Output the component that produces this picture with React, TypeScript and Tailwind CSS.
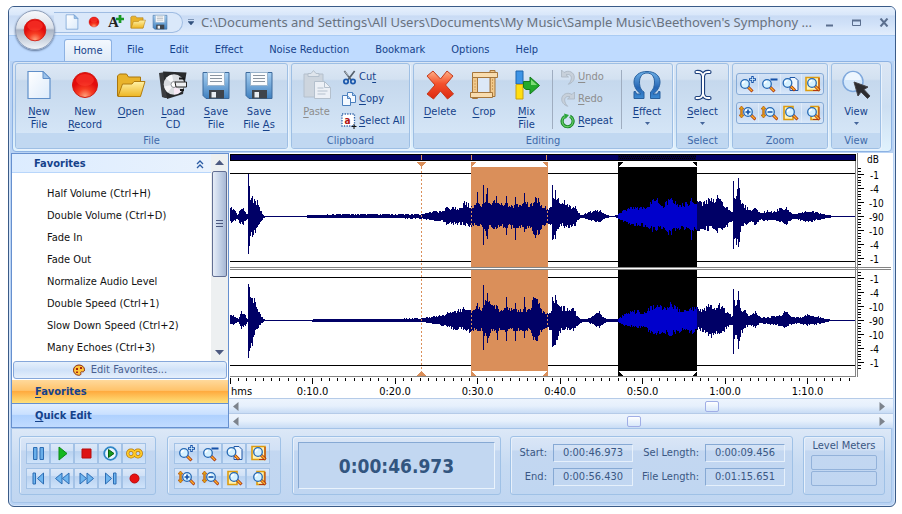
import type { ReactNode } from "react";

type Sample = [x: number, up: number, down: number];

const LEFT_CHANNEL: Sample[] = [
  [0, 8, 4], [1, 9, 6], [5, 5, 4], [7, 1, 2], [10, 6, 7], [13, 8, 8], [16, 2, 3], [17, 2, 2], [18, 42, 37], [19, 30, 29],
  [20, 16, 19], [22, 20, 20], [25, 15, 16], [27, 16, 10], [29, 9, 7], [31, 5, 4], [33, 1, 1], [36, 0, 0], [47, 0, 0],
  [74, 0, 0], [78, 1, 1], [116, 2, 1], [150, 2, 1], [191, 2, 2], [204, 5, 4], [213, 5, 5], [216, 9, 8], [225, 9, 7], [230, 8, 8], [234, 15, 8],
  [241, 10, 12], [246, 13, 8], [247, 24, 9], [248, 13, 9], [252, 12, 10], [253, 31, 28], [254, 13, 12], [257, 28, 22], [258, 13, 12],
  [263, 15, 12], [266, 20, 12], [267, 13, 11], [275, 13, 11], [276, 20, 18], [277, 13, 11], [284, 11, 11], [285, 19, 23], [286, 12, 11],
  [293, 13, 10], [294, 23, 15], [295, 14, 12], [300, 12, 11], [305, 19, 21], [308, 18, 18], [311, 11, 12], [317, 9, 8],
  [321, 9, 7], [322, 31, 23], [323, 18, 22], [325, 26, 22], [328, 18, 12], [331, 12, 9], [334, 16, 11], [339, 11, 11],
  [345, 10, 9], [348, 3, 3], [352, 1, 1], [358, 4, 3], [365, 6, 5], [370, 6, 5], [376, 1, 1], [384, 0, 0], [388, 2, 2],
  [393, 6, 5], [400, 9, 8], [410, 9, 9], [417, 9, 10], [422, 16, 15], [427, 18, 13], [432, 10, 12], [438, 17, 18],
  [441, 18, 18], [445, 15, 14], [450, 11, 12], [455, 14, 12], [460, 15, 13], [461, 18, 23], [462, 14, 13], [467, 15, 14], [473, 14, 12],
  [478, 18, 14], [483, 17, 12], [487, 21, 16], [492, 14, 13], [497, 9, 10], [502, 4, 4], [503, 35, 32], [504, 18, 22],
  [506, 20, 28], [508, 38, 30], [509, 28, 25], [510, 16, 15], [513, 12, 9], [520, 6, 5], [525, 8, 8], [530, 3, 3],
  [537, 6, 4], [543, 4, 3], [549, 8, 5], [556, 9, 8], [561, 3, 3], [566, 2, 2], [575, 5, 5], [582, 5, 5], [587, 4, 3],
  [593, 2, 2], [598, 1, 1], [603, 0, 0], [626, 0, 0],
];

const RIGHT_CHANNEL: Sample[] = [
  [0, 5, 3], [3, 5, 4], [8, 1, 1], [11, 9, 8], [15, 5, 5], [17, 1, 1], [18, 36, 37], [19, 33, 30], [20, 23, 27], [22, 22, 25],
  [24, 22, 14], [27, 11, 8], [30, 6, 4], [33, 1, 1], [36, 0, 0], [78, 0, 0], [85, 1, 1], [116, 1, 1], [160, 1, 1], [191, 2, 1],
  [203, 4, 3], [212, 5, 5], [217, 8, 6], [225, 9, 9], [233, 13, 9], [239, 10, 12], [245, 11, 9], [247, 17, 10], [252, 12, 10],
  [253, 35, 29], [254, 15, 15], [257, 27, 22], [260, 16, 12], [266, 15, 12], [267, 14, 19], [268, 11, 10], [275, 12, 11],
  [276, 23, 20], [277, 13, 10], [284, 11, 10], [285, 17, 20], [286, 11, 10], [293, 11, 10], [294, 23, 17], [295, 13, 10],
  [300, 10, 9], [303, 23, 19], [307, 21, 20], [311, 11, 11], [317, 7, 8], [321, 9, 9], [322, 23, 26], [325, 25, 24],
  [330, 13, 12], [334, 14, 9], [339, 10, 9], [343, 12, 10], [348, 3, 4], [352, 1, 1], [359, 2, 2], [365, 6, 5], [369, 9, 7],
  [373, 3, 3], [378, 1, 1], [386, 1, 1], [389, 2, 2], [394, 6, 5], [400, 9, 6], [408, 10, 7], [415, 7, 6], [418, 12, 11],
  [423, 15, 13], [430, 15, 13], [434, 13, 12], [440, 18, 15], [445, 14, 13], [449, 11, 12], [455, 10, 9], [462, 13, 13],
  [467, 13, 9], [473, 10, 11], [478, 16, 15], [481, 15, 17], [487, 12, 13], [489, 17, 13], [494, 12, 11], [498, 7, 6],
  [502, 4, 4], [503, 31, 33], [504, 20, 18], [507, 20, 18], [508, 29, 28], [509, 20, 20], [510, 12, 16], [514, 10, 7],
  [520, 5, 4], [525, 9, 7], [530, 3, 2], [537, 3, 3], [543, 4, 4], [549, 5, 5], [554, 9, 7], [557, 8, 5], [562, 3, 3],
  [570, 3, 3], [577, 6, 5], [590, 3, 3], [597, 1, 1], [602, 0, 0], [626, 0, 0],
];

function wavePath(samples: Sample[], from: number, to: number, mid: number) {
  const noise = (n: number) => {
    const v = Math.sin(n * 12.9898 + mid) * 43758.5453;
    return 0.66 + 0.4 * (v - Math.floor(v));
  };
  let top = `M${from} ${mid}`;
  let bottom = "";
  let i = 0;
  for (let x = 0; x < to; x++) {
    while (i < samples.length - 2 && samples[i + 1][0] <= x) i++;
    const [x0, u0, d0] = samples[i];
    const [x1, u1, d1] = samples[i + 1];
    const t = Math.min(1, (x - x0) / (x1 - x0));
    const peak = x === x0 ? 1 : 0;
    const up = Math.round((u0 + (u1 - u0) * t) * (peak || noise(x)));
    const down = Math.round((d0 + (d1 - d0) * t) * (peak || noise(x + 977)));
    if (x >= from) {
      top += `V${mid - up}H${x + 1}`;
      bottom = `V${mid + down + 1}H${x}` + bottom;
    }
  }
  return `${top}${bottom}Z`;
}

function Waveform() {
  return (
    <svg viewBox="0 0 626 224" preserveAspectRatio="none" className="h-[224px] min-w-0 flex-1" shapeRendering="crispEdges" role="img" aria-label="Waveform">
      <rect width="626" height="224" fill="#fff" />
      <rect y="1" width="626" height="7" fill="#000" />
      <rect x="1" y="2" width="624" height="5" fill="#000066" />
      <path d="M389 3.500H466M390 5.500H466" stroke="#000" strokeDasharray="1 1" />
      <rect x="388" y="2" width="78" height="5" fill="#000" opacity=".45" />
      <path d="M191.500 2V7M241.500 2V7M316.500 2V7" stroke="#da8f5a" />
      <path d="M0 20.500H626M0 108.500H626M0 124.500H626M0 212.500H626" stroke="#000" />
      <rect x="241" y="14" width="77" height="204" fill="#da8f5a" />
      <path d="M241 9h5l-4 5v5h-1zM318 9h-5l4 5v5h1zM241 223h5l-4 -5h-1zM318 223h-5l4 -5h1z" fill="#da8f5a" />
      <path d="M187 9h9l-4.500 5zM187 223h9l-4.500 -5z" fill="#da8f5a" />
      <rect x="388" y="14" width="79" height="204" fill="#000" />
      <path d="M388 9h5l-5 5zM467 9h-5l5 5zM388 223h5l-5 -5zM467 223h-5l5 -5z" fill="#000" />
      <path d={wavePath(LEFT_CHANNEL, 0, 626, 63)} fill="#000066" />
      <path d={wavePath(RIGHT_CHANNEL, 0, 626, 167)} fill="#000066" />
      <path d={wavePath(LEFT_CHANNEL, 388, 467, 63)} fill="#0000cc" />
      <path d={wavePath(RIGHT_CHANNEL, 388, 467, 167)} fill="#0000cc" />
      <rect y="114" width="626" height="3" fill="#fff" />
      <path d="M0 114.500H626M0 116.500H626M0 223.500H626M625.500 8V224" stroke="#848484" />
      <path d="M191.500 14V218" stroke="#da8f5a" strokeDasharray="2 2" />
      <path d="M241.500 54V76M317.500 54V76M241.500 158V178M317.500 158V178" stroke="#da8f5a" strokeDasharray="2 2" />
    </svg>
  );
}

const DB_MARKS = ["-1", "-4", "-10", "-90", "-10", "-4", "-1"];

function DecibelScale() {
  const ticks = Array.from({ length: 35 }, (_, i) => i - 17);
  return (
    <svg className="h-[224px] w-[37px] shrink-0 bg-white text-[10px]" shapeRendering="crispEdges" role="img" aria-label="Decibel scale">
      <path d="M1.500 0V224M0 114.500H35M0 116.500H35" stroke="#848484" />
      <text x="11" y="10">dB</text>
      {[64, 168].map((mid) => (
        <g key={mid}>
          {ticks.map((n) => (
            <path key={n} d={`M2 ${mid + Math.round(n * 2.8) - 0.5}h${n % 5 === 0 ? 6 : 3}`} stroke="#000" />
          ))}
          {DB_MARKS.map((mark, i) => (
            <text key={i} x={mark.length > 2 ? 13 : 14} y={mid + (i - 3) * 14 + 4}>{mark}</text>
          ))}
        </g>
      ))}
    </svg>
  );
}

function TimeRuler() {
  const ticks = Array.from({ length: 76 }, (_, i) => i);
  const labels = ["0:10.0", "0:20.0", "0:30.0", "0:40.0", "0:50.0", "1:00.0", "1:10.0"];
  return (
    <div className="flex bg-white pr-[37px]">
      <svg className="h-[21px] min-w-0 flex-1 overflow-visible text-[11px]" shapeRendering="crispEdges" role="img" aria-label="Time ruler">
        {ticks.map((n) => {
          const x = `${n * 1.318 + 0.05}%`;
          return <line key={n} x1={x} x2={x} y1="1" y2={n % 10 === 0 ? 7 : 4} stroke="#000" />;
        })}
        <text x="1" y="18">hms</text>
        {labels.map((label, i) => (
          <text key={label} x={`${(i + 1) * 13.18}%`} y="18" textAnchor="middle">{label}</text>
        ))}
      </svg>
    </div>
  );
}

function ScrollTrack({ label, value }: { label: string; value: number }) {
  return (
    <div className="flex h-[15px] items-center border-t border-[#b5cbe8] bg-linear-to-b from-[#edf4fd] via-[#e6f0fc] to-[#c8dcf5] px-1">
      <button aria-label={`${label} left`} className="flex w-2">
        <svg className="h-[9px] w-[6px]" viewBox="0 0 6 9"><path d="M5.500 0v9L0 4.500z" fill="#7d838c" /></svg>
      </button>
      <input
        type="range"
        aria-label={label}
        step="any"
        defaultValue={value}
        className="h-[11px] min-w-0 flex-1 appearance-none bg-transparent [&::-webkit-slider-thumb]:h-[11px] [&::-webkit-slider-thumb]:w-[14px] [&::-webkit-slider-thumb]:appearance-none [&::-webkit-slider-thumb]:rounded-[2px] [&::-webkit-slider-thumb]:border [&::-webkit-slider-thumb]:border-[#a0aee6] [&::-webkit-slider-thumb]:bg-linear-to-b [&::-webkit-slider-thumb]:from-white [&::-webkit-slider-thumb]:to-[#d7e7fa]"
      />
      <button aria-label={`${label} right`} className="flex w-3 justify-end pr-1">
        <svg className="h-[9px] w-[6px]" viewBox="0 0 6 9"><path d="M.5 0v9L6 4.500z" fill="#7d838c" /></svg>
      </button>
    </div>
  );
}

/* "&" marks the access key, as in "Load &CD" */
function Caption({ text }: { text: string }) {
  const at = text.indexOf("&");
  if (at < 0) return <>{text}</>;
  return <>{text.slice(0, at)}<u className="underline-offset-2">{text[at + 1]}</u>{text.slice(at + 2)}</>;
}

function PageIcon({ className }: { className: string }) {
  return (
    <svg viewBox="0 0 30 30" className={className}>
      <defs>
        <linearGradient id="page" x2="1" y2="1"><stop stopColor="#fff" /><stop offset="1" stopColor="#dcebfb" /></linearGradient>
      </defs>
      <path d="M4 1.500h15l7 7v20H4z" fill="url(#page)" stroke="#5f8fc9" strokeWidth="1.200" />
      <path d="M19 1.500v7h7z" fill="#9cc3ea" stroke="#5f8fc9" />
    </svg>
  );
}

function RecordIcon({ className }: { className: string }) {
  return (
    <svg viewBox="0 0 30 30" className={className}>
      <defs>
        <radialGradient id="ball" cx=".5" cy=".95" r=".6"><stop stopColor="#ffa27c" /><stop offset=".5" stopColor="#f63c22" /><stop offset="1" stopColor="#e30c0c" /></radialGradient>
      </defs>
      <circle cx="15" cy="15" r="12.500" fill="url(#ball)" stroke="#cf1a10" />
      <ellipse cx="15" cy="10" rx="9" ry="6" fill="#ff4434" opacity=".5" />
    </svg>
  );
}

function FolderIcon({ className }: { className: string }) {
  return (
    <svg viewBox="0 0 30 30" className={className}>
      <defs>
        <linearGradient id="folder" x2="0" y2="1"><stop stopColor="#fff2a8" /><stop offset="1" stopColor="#eeb622" /></linearGradient>
      </defs>
      <path d="M1.500 26V6l2-2h7l2 3h12v19z" fill="#e9b32b" stroke="#a9760d" />
      <path d="M2 26.500L6.500 14H16l2-2.500h11L24.500 26.500z" fill="url(#folder)" stroke="#b27d10" />
    </svg>
  );
}

function DiskIcon({ className }: { className: string }) {
  return (
    <svg viewBox="0 0 30 30" className={className}>
      <defs>
        <linearGradient id="disk" x2="0" y2="1"><stop stopColor="#a8d0f2" /><stop offset="1" stopColor="#3f80bf" /></linearGradient>
      </defs>
      <path d="M2 2.500h26v26H5l-3-3z" fill="url(#disk)" stroke="#3c6a9c" />
      <path d="M6.500 2.500h17v13h-17z" fill="#fbfcfd" stroke="#9ab4cc" />
      <path d="M9 5.500h12M9 8.500h12M9 11.500h12" stroke="#8a949f" />
      <path d="M8 20h15v8.500H8z" fill="#3f444b" />
      <path d="M10.500 22h4.500v5.500h-4.500z" fill="#e8edf2" />
    </svg>
  );
}

function CdIcon() {
  return (
    <svg viewBox="0 0 30 30" className="size-[30px]">
      <path d="M1 3l7-1 3 26H7L4 27z" fill="#3b3d40" />
      <path d="M5 1.500L28.500 2.500 25 24 9 29z" fill="#292b2d" />
      <circle cx="16" cy="14.500" r="10.300" fill="#d9dce0" />
      <path d="M16 14.500L8 8.500a10 10 0 0 1 6-3.800z" fill="#f7f8fa" />
      <path d="M16 14.500l7 7a10 10 0 0 1-7 3z" fill="#f7e9f5" />
      <path d="M16 14.500l-9.700 2a10 10 0 0 0 3.500 6z" fill="#f4f4f6" />
      <circle cx="16" cy="14.500" r="3" fill="#fff" stroke="#8c8f94" />
      <path d="M17 12h11.500v5H18z" fill="#eceef0" stroke="#222" />
      <path d="M21 8.500h6M22 20h4" stroke="#17181a" strokeWidth="2" />
    </svg>
  );
}

function PasteIcon() {
  return (
    <svg viewBox="0 0 30 30" className="size-[30px]" stroke="#b4c0cd">
      <path d="M2 4h19v23H2z" fill="#cdd5de" />
      <path d="M6 6.500V3.500h3L11.500.5 14 3.500h3v3z" fill="#dfe5ec" />
      <path d="M12.500 11.500h10l6 6v11h-16z" fill="#ecf0f6" />
      <path d="M22.500 11.500v6h6M15.500 18h6M15.500 21h10M15.500 24h8" fill="none" />
    </svg>
  );
}

function CutIcon() {
  return (
    <svg viewBox="0 0 16 16" className="size-[15px]">
      <path d="M2.500 1L10 11M13.500 1L6 11" stroke="#55606c" strokeWidth="1.800" />
      <path d="M3 1.500l4 5" stroke="#eef2f6" strokeWidth=".6" />
      <circle cx="4.300" cy="12.300" r="2.300" fill="none" stroke="#1f5bad" strokeWidth="1.900" />
      <circle cx="11.700" cy="12.300" r="2.300" fill="none" stroke="#1f5bad" strokeWidth="1.900" />
    </svg>
  );
}

function CopyIcon() {
  return (
    <svg viewBox="0 0 16 16" className="size-[16px]" fill="#f4f9ff" stroke="#4c80be">
      <path d="M6.500 1.500h5l3 3v7h-8z" />
      <path d="M1.500 4.500h5l3 3v7h-8z" />
      <path d="M6.500 4.500v3h3M11.500 1.500v3h3" fill="#b5d4f2" />
    </svg>
  );
}

function SelectAllIcon() {
  return (
    <svg viewBox="0 0 16 16" className="size-[16px]">
      <path d="M1 1h12.500v12H1z" fill="#fff" stroke="#2f62a8" strokeWidth="1.300" strokeDasharray="1.300 1.300" />
      <text x="3.500" y="10.500" fontSize="10" fontWeight="bold" fill="#b11414">a</text>
      <path d="M10.500 13.500h5M13 11v5" stroke="#111" />
    </svg>
  );
}

function DeleteIcon() {
  return (
    <svg viewBox="0 0 30 30" className="size-[30px]">
      <defs>
        <linearGradient id="cross" x2="0" y2="1"><stop stopColor="#ffb287" /><stop offset=".45" stopColor="#f4512c" /><stop offset="1" stopColor="#dd2810" /></linearGradient>
      </defs>
      <path d="M2 6l6-5 7.500 8L22 1l6 5-7.500 9 8 9-6 5-7-8-7 8-6.500-5 8-9z" fill="url(#cross)" stroke="#c23a1c" />
    </svg>
  );
}

function CropIcon() {
  return (
    <svg viewBox="0 0 30 30" className="size-[30px]">
      <path d="M3.500 3.500v25h5v-25zM21 .5v26h5V.5z" fill="#f2c98b" stroke="#a5763c" />
      <path d="M1.500 22.500h22v5h-22zM3.500 2.500h25v5h-25z" fill="#f8dcae" stroke="#a5763c" />
      <path d="M8.500 7.500H21v15H8.500z" fill="#dce8f7" stroke="#a5763c" />
      <path d="M6 10v10M23.500 9v11" stroke="#cf9f5d" strokeDasharray="2 1" />
    </svg>
  );
}

function MixIcon() {
  return (
    <svg viewBox="0 0 30 30" className="size-[30px]">
      <path d="M4 1h7v13H4z" fill="#3d94e6" stroke="#1c65ad" />
      <path d="M4 14.500h7V29H4z" fill="#ffde12" stroke="#c9a20c" />
      <path d="M11.500 11.500H18V7l9.500 8.500L18 24v-4.500h-4l-2.500-2z" fill="#22a92c" stroke="#137a1c" />
      <path d="M19 9.500l6 5.500h-6z" fill="#7ddb78" />
    </svg>
  );
}

function TurnIcon({ flip }: { flip?: boolean }) {
  return (
    <svg viewBox="0 0 16 16" className={flip ? "size-[16px] -scale-x-100" : "size-[16px]"}>
      <path d="M1.500 1v7h7L6 5.800c3-1 5.500.5 5.300 3.500-.1 2-1 4-3 6 4-1.500 6-4 6-7C14.300 3.500 9 .5 4 3.500z" fill="#c7d0da" stroke="#a9b5c2" strokeWidth=".8" />
    </svg>
  );
}

function RepeatIcon() {
  return (
    <svg viewBox="0 0 16 16" className="size-[16px]">
      <path d="M10 3.300A5.500 5.500 0 1 1 5 3.400" fill="none" stroke="#158528" strokeWidth="3.200" />
      <path d="M10 3.300A5.500 5.500 0 1 1 5 3.400" fill="none" stroke="#62c961" strokeWidth="1.300" />
      <path d="M4 .5l5 1.500-3.500 4z" fill="#2aa53b" />
    </svg>
  );
}

function OmegaIcon() {
  return (
    <svg viewBox="0 0 30 30" className="size-[30px]">
      <defs>
        <linearGradient id="omega" x2="0" y2="1"><stop stopColor="#6eb1e8" /><stop offset=".6" stopColor="#2565b4" /><stop offset="1" stopColor="#3c8ad2" /></linearGradient>
      </defs>
      <path d="M2 21.500h1.500l1 2.500H9c-4-2.500-7-7-7-12C2 5.500 7.500 1.500 15 1.500S28 5.500 28 12c0 5-3 9.500-7 12h4.500l1-2.500H28V28.500h-9.500V22C21.500 20 22.500 16 22.500 12c0-5-2.500-9-7.500-9s-7.500 4-7.500 9c0 4 1 8 4.500 10v6.500H2z" fill="url(#omega)" stroke="#28609e" />
    </svg>
  );
}

function CaretIcon() {
  return (
    <svg viewBox="0 0 20 32" className="h-8 w-5">
      <path d="M3.500 3c4-.5 5.500.5 6.500 4 1-3.500 2.500-4.500 6.500-4M3.500 29c4 .5 5.500-.5 6.500-4 1 3.500 2.500 4.500 6.500 4M10 7v18" fill="none" stroke="#1c3f7c" strokeWidth="4.200" strokeLinecap="round" />
      <path d="M3.500 3c4-.5 5.500.5 6.500 4 1-3.500 2.500-4.500 6.500-4M3.500 29c4 .5 5.500-.5 6.500-4 1 3.500 2.500 4.500 6.500 4M10 7v18" fill="none" stroke="#fff" strokeWidth="2" strokeLinecap="round" />
    </svg>
  );
}

function ViewIcon() {
  return (
    <svg viewBox="0 0 30 30" className="size-[30px]">
      <circle cx="12" cy="11.500" r="10" fill="#d3e7fb" stroke="#7fa8dc" strokeWidth="1.500" />
      <path d="M4 10a8 8 0 0 1 16 0z" fill="#edf6ff" />
      <path d="M13 12l14 5-4 2.500 6 6.500-2.500 2.500-6.500-6.500-3 4z" fill="#2c2c30" stroke="#45454a" />
    </svg>
  );
}

type ZoomKind = "in" | "out" | "page" | "all" | "vin" | "vout" | "start" | "end";

function ZoomIcon({ kind }: { kind: ZoomKind }) {
  const cx = kind === "vin" || kind === "vout" ? 9 : kind === "in" || kind === "out" ? 6 : kind === "page" ? 5.5 : 8;
  const cy = kind === "in" || kind === "out" ? 8 : 7;
  return (
    <svg viewBox="0 0 17 17" className="size-[17px]">
      {kind === "page" && <path d="M8 1.500h5l3 3v10H8z" fill="#eef6ff" stroke="#1f57a5" />}
      {(kind === "all" || kind === "start") && <path d={kind === "all" ? "M2 1.500h13v13H2z" : "M2 1.500h9v13H2z"} fill="#fff3b4" stroke="#dd9c10" strokeWidth="1.600" />}
      {kind === "end" && <path d="M7 1.500h7.500v13H7z" fill="#fff3b4" stroke="#dd9c10" strokeWidth="1.600" />}
      {(kind === "all" || kind === "end") && <path d="M15 2v12.500H9" fill="none" stroke="#b7360d" />}
      {(kind === "vin" || kind === "vout") && <path d="M2.500 1L5 4H3.300v6H5l-2.500 3L0 10h1.700V4H0z" fill="#e0a410" stroke="#b8520c" strokeWidth=".7" />}
      <path d={`M${cx + 3} ${cy + 3}l4.500 4.500`} stroke="#a42c10" strokeWidth="3" />
      <path d={`M${cx + 3} ${cy + 3}l4 4`} stroke="#ffb325" strokeWidth="1.500" />
      <circle cx={cx} cy={cy} r="4.300" fill="#d5f1ff" stroke="#2769b4" strokeWidth="1.300" />
      <path d={`M${cx - 2.500} ${cy}a2.500 2.500 0 0 1 2.500-2.500`} fill="none" stroke="#fff" strokeWidth="1.300" />
      {kind === "in" && <path d="M13.500 0v7M10 3.500h7" stroke="#1551a8" strokeWidth="2.400" />}
      {kind === "in" && <path d="M13.500 1v5M11 3.500h5" stroke="#d5f1ff" strokeWidth=".8" />}
      {kind === "out" && <path d="M9.500 3.500h7" stroke="#1551a8" strokeWidth="2" />}
      {kind === "vin" && <path d="M9 4.500v5M6.500 7h5" stroke="#1551a8" strokeWidth="1.600" />}
      {kind === "vout" && <path d="M6.500 7h5" stroke="#1551a8" strokeWidth="1.600" />}
    </svg>
  );
}

const TRANSPORT: { label: string; art: ReactNode }[] = [
  { label: "Pause", art: <path d="M3.500 2.500h3.500v12H3.500zM10 2.500h3.500v12H10z" fill="#69aee9" stroke="#2c6db4" /> },
  { label: "Play", art: <path d="M5 2l8 6.500L5 15z" fill="#14b81f" stroke="#0d8a17" /> },
  { label: "Stop", art: <path d="M4 4h9v9H4z" fill="#dd1313" stroke="#b80c0c" /> },
  { label: "Play loop", art: <><circle cx="8.500" cy="8.500" r="6.300" fill="#e9f6ff" stroke="#2f86c6" strokeWidth="1.800" /><path d="M6.500 4.500l5.500 4-5.500 4z" fill="#159b20" stroke="#0a5e12" /></> },
  { label: "Loop", art: <><circle cx="5" cy="8.500" r="3.300" fill="none" stroke="#b6780c" strokeWidth="3.200" /><circle cx="12" cy="8.500" r="3.300" fill="none" stroke="#b6780c" strokeWidth="3.200" /><circle cx="5" cy="8.500" r="3.300" fill="none" stroke="#ffcb27" strokeWidth="1.800" /><circle cx="12" cy="8.500" r="3.300" fill="none" stroke="#ffcb27" strokeWidth="1.800" /></> },
  { label: "Go to start", art: <path d="M3 3h2.500v11H3zM13.500 3v11L7.500 8.500z" fill="#6fb5ef" stroke="#2c6db4" /> },
  { label: "Rewind", art: <path d="M8 3v11L1.500 8.500zM15 3v11L8.500 8.500z" fill="#6fb5ef" stroke="#2c6db4" /> },
  { label: "Forward", art: <path d="M2 3v11l6.500-5.500zM9 3v11l6.500-5.500z" fill="#6fb5ef" stroke="#2c6db4" /> },
  { label: "Go to end", art: <path d="M11.500 3H14v11h-2.500zM3.500 3v11l6-5.500z" fill="#6fb5ef" stroke="#2c6db4" /> },
  { label: "Record", art: <circle cx="8.500" cy="8.500" r="4.500" fill="#e81212" stroke="#b80c0c" /> },
];

const ZOOMS: { label: string; kind: ZoomKind }[] = [
  { label: "Zoom in", kind: "in" },
  { label: "Zoom out", kind: "out" },
  { label: "Zoom to selection", kind: "page" },
  { label: "Zoom to all", kind: "all" },
  { label: "Vertical zoom in", kind: "vin" },
  { label: "Vertical zoom out", kind: "vout" },
  { label: "Zoom to selection start", kind: "start" },
  { label: "Zoom to selection end", kind: "end" },
];

function ZoomRow({ items }: { items: typeof ZOOMS }) {
  return (
    <div className="flex h-[22px] w-[88px] rounded-[3px] border border-[#86aad6] bg-linear-to-b from-[#d4e3f6] via-[#c3d8f1] to-[#d9e8fa]">
      {items.map(({ label, kind }) => (
        <button key={kind} aria-label={label} className="flex flex-1 items-center justify-center border-r border-[#dfebf9] last:border-r-0">
          <ZoomIcon kind={kind} />
        </button>
      ))}
    </div>
  );
}

function Arrow() {
  return <svg viewBox="0 0 5 3" className="mt-1 h-[3px] w-[5px]"><path d="M0 0h5L2.500 3z" fill="#44659b" /></svg>;
}

function BigButton({ icon, lines, className, muted, menu }: { icon: ReactNode; lines: string[]; className: string; muted?: boolean; menu?: boolean }) {
  return (
    <button className={`flex flex-col items-center pt-[3px] leading-[13px] ${className} ${muted ? "text-[#8d8d8d]" : "text-[#15428b]"}`}>
      <span className="mb-1 flex h-8 items-center">{icon}</span>
      {lines.map((line) => <span key={line} className="whitespace-nowrap"><Caption text={line} /></span>)}
      {menu && <Arrow />}
    </button>
  );
}

function SmallButton({ icon, text, muted }: { icon: ReactNode; text: string; muted?: boolean }) {
  return (
    <button className={`flex h-[22px] items-center gap-[2px] whitespace-nowrap ${muted ? "text-[#8d8d8d]" : "text-[#15428b]"}`}>
      <span className="flex w-4 justify-center">{icon}</span>
      <span><Caption text={text} /></span>
    </button>
  );
}

function RibbonGroup({ title, className, children }: { title: string; className: string; children: ReactNode }) {
  return (
    <section aria-label={title} className={`flex h-[86px] flex-col overflow-hidden rounded-[3px] border border-[#9ebfe4] bg-[linear-gradient(#dde8f5_0%,#d3e1f1_18%,#c5d8ed_20%,#d9e9f9_100%)] shadow-[1px_1px_0_#eaf3fd] ${className}`}>
      <div className="flex h-[69px] pt-[2px]">{children}</div>
      <h2 className="flex h-[15px] items-center justify-center bg-[#c1d8f1] text-[#3e6aaa]">{title}</h2>
    </section>
  );
}

const FAVORITES = [
  "Half Volume (Ctrl+H)",
  "Double Volume (Ctrl+D)",
  "Fade In",
  "Fade Out",
  "Normalize Audio Level",
  "Double Speed (Ctrl+1)",
  "Slow Down Speed (Ctrl+2)",
  "Many Echoes (Ctrl+3)",
];

function Sidebar() {
  return (
    <aside className="flex w-[218px] shrink-0 flex-col border border-[#6690cf] bg-white">
      <div className="flex h-[207px]">
        <div className="min-w-0 flex-1">
          <h2 className="flex h-[19px] items-center justify-between border-b border-[#b8d6fb] bg-linear-to-r from-[#dcecff] to-[#e9f2fd] pt-[2px] pr-[7px] pl-[22px] font-bold text-[#15428b]">
            Favorites
            <svg viewBox="0 0 8 9" className="h-[9px] w-2"><path d="M1 4l3-3 3 3M1 8l3-3 3 3" fill="none" stroke="#2b5ca5" strokeWidth="1.300" /></svg>
          </h2>
          <ul className="pt-[10px] text-[#111]">
            {FAVORITES.map((name) => (
              <li key={name} className="flex h-[22px] items-center pl-[35px] whitespace-nowrap">{name}</li>
            ))}
          </ul>
        </div>
        <div className="flex w-[17px] flex-col items-center bg-[#edf0f1]">
          <button aria-label="Scroll up" className="flex h-[17px] items-center"><svg viewBox="0 0 9 5" className="h-[5px] w-[9px]"><path d="M0 5h9L4.500 0z" fill="#4d5a80" /></svg></button>
          <div className="flex h-[106px] w-[15px] items-center justify-center rounded-[2px] border border-[#626f93] bg-linear-to-r from-[#e6edf7] via-[#c5d3e8] to-[#a7b8d5]">
            <svg viewBox="0 0 7 8" className="h-2 w-[7px]"><path d="M0 .5h7M0 3.500h7M0 6.500h7" stroke="#4d5a80" /></svg>
          </div>
          <button aria-label="Scroll down" className="mt-auto flex h-[17px] items-center"><svg viewBox="0 0 9 5" className="h-[5px] w-[9px]"><path d="M0 0h9L4.500 5z" fill="#4d5a80" /></svg></button>
        </div>
      </div>
      <button className="mx-px mb-[1px] flex h-[18px] items-center justify-center gap-[6px] rounded-[3px] border border-[#86a7da] bg-linear-to-b from-[#e6f0fc] via-[#cfe1f8] to-[#e5effc] text-[#4a5f8f]">
        <svg viewBox="0 0 12 12" className="size-3">
          <path d="M6 1c3 0 5.500 2 5.500 4.800 0 2-1.500 2.200-2.800 2-1-.1-1.300.8-.8 1.700S7 11.500 5.500 11.300C2.500 11 .5 8.800.5 6.200.5 3 3 1 6 1z" fill="#ffc43a" stroke="#8a2c12" />
          <path d="M3 4h2v2H3zM7 3h2v2H7zM3 7.500h2v1.500H3z" fill="#a82612" />
        </svg>
        Edit Favorites...
      </button>
      <button className="h-[23px] bg-[linear-gradient(#ffd99b_0%,#ffc36b_45%,#ffab3f_50%,#fee07a_100%)] pl-[23px] text-left font-bold text-[#15428b]"><Caption text="&Favorites" /></button>
      <button className="h-[24px] border-t border-[#6690cf] bg-[linear-gradient(#e0eeff_0%,#c9e0ff_45%,#afd1fe_50%,#c0dbff_100%)] pl-[23px] text-left font-bold text-[#15428b]"><Caption text="&Quick Edit" /></button>
    </aside>
  );
}

function Panel({ className, children }: { className: string; children: ReactNode }) {
  return (
    <section className={`h-[59px] rounded-[3px] border border-[#9fc1e6] bg-[linear-gradient(#dae6f6_0%,#d2e1f5_22%,#c3d7f1_25%,#c0d6f1_100%)] shadow-[inset_1px_1px_0_#e7f0fb] ${className}`}>
      {children}
    </section>
  );
}

const deckButton = "flex h-[21px] w-6 items-center justify-center border border-[#a3c2e6] bg-[linear-gradient(#dce8f8_0%,#d0e1f6_35%,#b9d2f0_40%,#cfe3fa_100%)]";

function Field({ id, label, value }: { id: string; label: string; value: string }) {
  return (
    <div className="flex items-center justify-end gap-[6px]">
      <label htmlFor={id} className="whitespace-nowrap">{label}</label>
      <output id={id} className="flex h-[18px] w-[80px] items-center justify-center border border-t-[#86a9d4] border-r-[#e6f0fb] border-b-[#e6f0fb] border-l-[#86a9d4]">{value}</output>
    </div>
  );
}

function StatusDeck() {
  return (
    <footer className="flex h-[75px] rounded-b-[3px] border border-[#a4c3e8] bg-linear-to-b from-[#dce8f7] via-[#c6daf2] to-[#c0d6f1] pt-[7px] pr-[6px] pl-[7px]">
      <Panel className="w-[137px]">
        <div className="grid grid-cols-[repeat(5,24px)] gap-y-1 px-[6px] pt-[6px]">
          {TRANSPORT.map(({ label, art }) => (
            <button key={label} aria-label={label} className={deckButton}><svg viewBox="0 0 17 17" className="size-[17px]">{art}</svg></button>
          ))}
        </div>
      </Panel>
      <Panel className="ml-[11px] w-[114px]">
        <div className="grid grid-cols-[repeat(4,24px)] gap-y-1 px-[6px] pt-[6px]">
          {ZOOMS.map(({ label, kind }) => (
            <button key={kind} aria-label={label} className={deckButton}><ZoomIcon kind={kind} /></button>
          ))}
        </div>
      </Panel>
      <Panel className="ml-[11px] flex w-[209px] p-[5px]">
        <output aria-label="Position" className="flex flex-1 items-center justify-center border border-t-[#86a9d4] border-r-[#eaf3fc] border-b-[#eaf3fc] border-l-[#86a9d4] bg-[#c2d7f1] text-[19px] font-bold text-[#32557f]">0:00:46.973</output>
      </Panel>
      <Panel className="ml-[9px] grid min-w-0 flex-1 grid-cols-[122px_1fr] content-center gap-y-[6px] pr-[7px] pb-[2px] text-[#3a5784]">
        <Field id="start" label="Start:" value="0:00:46.973" />
        <Field id="sel" label="Sel Length:" value="0:00:09.456" />
        <Field id="end" label="End:" value="0:00:56.430" />
        <Field id="file" label="File Length:" value="0:01:15.651" />
      </Panel>
      <Panel className="ml-[10px] w-[82px] px-[7px] text-center text-[#3a5784]">
        <h2 className="h-[18px] leading-[17px] whitespace-nowrap">Level Meters</h2>
        <div className="h-[15px] rounded-[2px] border border-[#93b2da]" />
        <div className="mt-px h-[15px] rounded-[2px] border border-[#93b2da]" />
      </Panel>
    </footer>
  );
}

const TABS = ["File", "Edit", "Effect", "Noise Reduction", "Bookmark", "Options", "Help"];

export default function App() {
  return (
    <div className="bg-white pt-[6px] pr-[6px] pb-[7px] pl-2 font-['DejaVu_Sans_Condensed','DejaVu_Sans',sans-serif] text-[11px] leading-[14px] [font-stretch:condensed]">
      <main className="relative rounded-[6px] border border-[#3a5b88] bg-[#b9d3f4] pb-[3px] shadow-[inset_0_0_0_1px_#d6e6fa]">
        <header className="flex h-[29px] items-center rounded-t-[5px] border-b border-[#a9cbf3] bg-[linear-gradient(#e6f0fc_0%,#d9e7fa_28%,#c9dbf4_32%,#d0e1f8_60%,#e2edfc_100%)] pt-[2px] pr-[6px] pl-[45px]">
          <div className="flex h-[21px] w-[129px] items-center gap-[6px] rounded-r-[11px] border border-l-0 border-[#9fbce2] bg-[#dae8fa] pl-[10px]">
            <button aria-label="New"><PageIcon className="size-4" /></button>
            <button aria-label="Record"><RecordIcon className="size-4 p-[2px]" /></button>
            <button aria-label="Add text" className="flex w-4 font-['Liberation_Serif',serif] text-[15px] font-bold text-[#222]">
              A<svg viewBox="0 0 7 7" className="-ml-[3px] size-[8px]"><path d="M3.500 0v7M0 3.500h7" stroke="#1a9a26" strokeWidth="2.400" /></svg>
            </button>
            <button aria-label="Open"><FolderIcon className="size-4" /></button>
            <button aria-label="Save"><DiskIcon className="size-4" /></button>
          </div>
          <button aria-label="Customize toolbar" className="ml-[5px]">
            <svg viewBox="0 0 6 6" className="size-[6px]"><path d="M0 .5h6M0 2.500h6L3 6z" fill="#32517d" stroke="#32517d" strokeWidth=".5" /></svg>
          </button>
          <h1 className="ml-[7px] min-w-0 flex-1 font-['Noto_Sans',sans-serif] text-[13px] whitespace-nowrap text-[#69727e]">
            C:\Documents and Settings\All Users\Documents\My Music\Sample Music\Beethoven's Symphony ...
          </h1>
          <div className="flex w-[72px] items-center justify-between pl-2">
            <button aria-label="Minimize" className="flex w-[9px]"><svg viewBox="0 0 9 9" className="size-[9px]"><path d="M1 7.500h7" stroke="#5b6f8f" strokeWidth="2" /></svg></button>
            <button aria-label="Maximize"><svg viewBox="0 0 9 9" className="size-[9px]"><path d="M.5 2.500h8v5h-8z" fill="none" stroke="#5b6f8f" /><path d="M0 2.500h9" stroke="#5b6f8f" strokeWidth="2" /></svg></button>
            <button aria-label="Close"><svg viewBox="0 0 10 9" className="h-[9px] w-[10px]"><path d="M1.500.5l7 8M8.500.5l-7 8" stroke="#5b6f8f" strokeWidth="2" /></svg></button>
          </div>
        </header>

        <button aria-label="Application menu" className="absolute top-[3px] left-[6px] flex size-10 items-center justify-center rounded-full border border-[#8d9db8] bg-[linear-gradient(#f7f9fc_0%,#d9dfe8_45%,#a9b4c5_50%,#f0f4f9_100%)] shadow-[0_1px_2px_#5f7699]">
          <RecordIcon className="size-[26px]" />
        </button>

        <nav className="flex h-[25px] items-center bg-[#bfdbff] pt-[3px] pl-[55px] text-[#15428b]">
          <button className="mr-[2px] h-[22px] w-[48px] rounded-t-[3px] border border-b-0 border-[#8db2e3] bg-linear-to-b from-[#f3f8fe] to-[#dfeaf7]">Home</button>
          {TABS.map((tab) => <button key={tab} className="px-[13px] whitespace-nowrap">{tab}</button>)}
        </nav>

        <div className="mx-[3px] flex h-[91px] gap-[3px] rounded-[4px] border border-[#8db2e3] bg-linear-to-b from-[#dbe6f4] via-[#cddff2] to-[#e0f2fd] px-[2px] pt-[1px]">
          <RibbonGroup title="File" className="w-[273px]">
            <BigButton className="w-[46px]" icon={<PageIcon className="size-[30px]" />} lines={["&New", "File"]} />
            <BigButton className="w-[46px]" icon={<RecordIcon className="size-[30px]" />} lines={["New", "&Record"]} />
            <BigButton className="w-[46px]" icon={<FolderIcon className="size-[30px]" />} lines={["&Open"]} />
            <BigButton className="w-[38px]" icon={<CdIcon />} lines={["&Load", "CD"]} />
            <BigButton className="w-[48px]" icon={<DiskIcon className="size-[30px]" />} lines={["&Save", "File"]} />
            <BigButton className="w-[38px]" icon={<DiskIcon className="size-[30px]" />} lines={["Save", "File &As"]} />
          </RibbonGroup>
          <RibbonGroup title="Clipboard" className="w-[119px]">
            <BigButton className="w-[49px]" muted icon={<PasteIcon />} lines={["&Paste"]} />
            <div>
              <SmallButton icon={<CutIcon />} text="Cu&t" />
              <SmallButton icon={<CopyIcon />} text="&Copy" />
              <SmallButton icon={<SelectAllIcon />} text="&Select All" />
            </div>
          </RibbonGroup>
          <RibbonGroup title="Editing" className="w-[260px]">
            <BigButton className="w-[52px]" icon={<DeleteIcon />} lines={["&Delete"]} />
            <BigButton className="w-[36px]" icon={<CropIcon />} lines={["&Crop"]} />
            <BigButton className="w-[49px]" icon={<MixIcon />} lines={["&Mix", "File"]} />
            <div className="my-1 ml-px mr-[7px] border-l border-[#9fadc0]" />
            <div className="w-[61px]">
              <SmallButton muted icon={<TurnIcon />} text="&Undo" />
              <SmallButton muted icon={<TurnIcon flip />} text="&Redo" />
              <SmallButton icon={<RepeatIcon />} text="&Repeat" />
            </div>
            <div className="my-1 border-l border-[#9fadc0]" />
            <BigButton className="w-[50px]" menu icon={<OmegaIcon />} lines={["&Effect"]} />
          </RibbonGroup>
          <RibbonGroup title="Select" className="w-[53px]">
            <BigButton className="w-full" menu icon={<CaretIcon />} lines={["&Select"]} />
          </RibbonGroup>
          <RibbonGroup title="Zoom" className="w-[96px]">
            <div className="flex flex-1 flex-col items-center gap-[7px] pt-[7px]">
              <ZoomRow items={ZOOMS.slice(0, 4)} />
              <ZoomRow items={ZOOMS.slice(4)} />
            </div>
          </RibbonGroup>
          <RibbonGroup title="View" className="w-[50px]">
            <BigButton className="w-full" menu icon={<ViewIcon />} lines={["View"]} />
          </RibbonGroup>
        </div>

        <div className="mx-[2px] mt-px flex bg-white">
          <Sidebar />
          <div className="min-w-0 flex-1">
            <div className="pl-[1px]">
              <div className="flex"><Waveform /><DecibelScale /></div>
              <TimeRuler />
            </div>
            <ScrollTrack label="Horizontal zoom" value={74.6} />
            <ScrollTrack label="Scroll position" value={62} />
          </div>
        </div>

        <div className="mr-[3px] ml-[2px]"><StatusDeck /></div>
      </main>
    </div>
  );
}
